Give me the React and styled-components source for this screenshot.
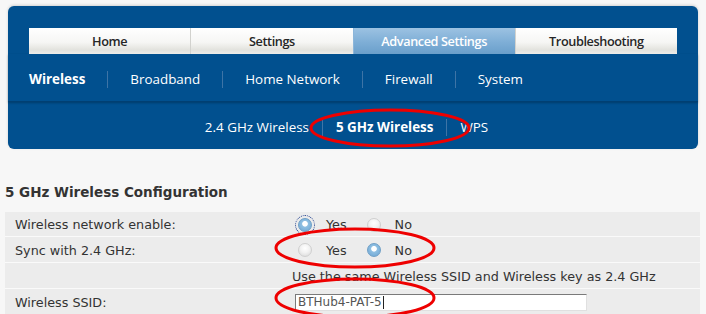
import React from "react";
import styled, { createGlobalStyle } from "styled-components";

const GlobalStyle = createGlobalStyle`
  html, body {
    margin: 0;
    padding: 0;
    background: #f7f7f7;
  }
  body {
    font-family: "DejaVu Sans", Verdana, sans-serif;
  }
`;

const Page = styled.div`
  position: relative;
  width: 706px;
  height: 314px;
  overflow: hidden;
  padding-top: 6px;
  box-sizing: border-box;
`;

const Banner = styled.div`
  margin: 0 8px;
  background: #01508f;
  border-radius: 6px;
  box-shadow: 0 -1px 3px rgba(0, 0, 0, 0.15);
  font-family: "Open Sans", "Noto Sans", sans-serif;
  color: #fff;
`;

const TabBar = styled.div`
  display: flex;
  padding: 22px 21px 0;
`;

const Tab = styled.div`
  flex: 1;
  height: 26px;
  display: flex;
  align-items: center;
  justify-content: center;
  font-size: 12.7px;
  font-weight: 600;
  letter-spacing: -0.4px;
  color: ${(p) => (p.$active ? "#ffffff" : "#262626")};
  background: ${(p) =>
    p.$active
      ? "linear-gradient(to bottom, #9cc2e2 0%, #7eaed6 55%, #6a9fcb 100%)"
      : "linear-gradient(to bottom, #ffffff 0%, #f6f6f4 55%, #e2e2dd 85%, #ececea 100%)"};
  border-left: 1px solid ${(p) => (p.$active ? "#8cb6da" : "#d2d2ce")};
  &:first-child {
    border-left: none;
  }
`;

const MainNav = styled.div`
  display: flex;
  align-items: center;
  height: 48px;
  padding: 3px 0 0 21px;
  box-sizing: border-box;
  border-bottom: 1px solid #013f72;
  box-shadow: 0 1px 2px rgba(0, 0, 0, 0.25);
`;

const SubNav = styled.div`
  display: flex;
  align-items: center;
  justify-content: center;
  height: 47px;
  padding-top: 4px;
  box-sizing: border-box;
`;

const NavItem = styled.span`
  font-size: 13.4px;
  font-weight: ${(p) => (p.$active ? 700 : 400)};
  color: #fff;
  padding: 0 ${(p) => p.$pad}px;
  line-height: 17px;
  border-left: 1px solid #3e74a6;
  &:first-child {
    padding-left: 0;
    border-left: none;
  }
`;

const Content = styled.div`
  padding: 0 6px 0 5px;
`;

const Heading = styled.h2`
  margin: 35px 0 12px;
  font-size: 13.5px;
  font-weight: 700;
  color: #333;
`;

const Row = styled.div`
  display: grid;
  grid-template-columns: 287px 1fr;
  align-items: center;
  height: 25px;
  padding-top: 1px;
  box-sizing: border-box;
  background: #ececec;
  border-bottom: 1px solid #fafafa;
  font-size: 12.75px;
  color: #333;
  & + & {
    height: 26px;
  }
`;

const Label = styled.div`
  padding-left: 10px;
`;

const Value = styled.div`
  display: flex;
  align-items: center;
`;

const RadioWrap = styled.label`
  display: flex;
  align-items: center;
  margin-right: 14px;
`;

const Radio = styled.span`
  position: relative;
  width: 14px;
  height: 14px;
  margin: 0 14px 0 6px;
  border-radius: 50%;
  box-sizing: border-box;
  background: ${(p) =>
    p.$checked
      ? "radial-gradient(circle at 50% 40%, #ffffff 0 2.4px, #8fbfe2 3.2px, #6aa4d2 100%)"
      : "radial-gradient(circle at 50% 35%, #ffffff 0%, #f2f2f2 45%, #d6d6d6 100%)"};
  border: 1px solid ${(p) => (p.$checked ? "#6f9fc6" : "#d0d0d0")};
  outline: ${(p) => (p.$focus ? "1px dotted #1a3a8a" : "none")};
  outline-offset: 2px;
`;

const Note = styled.div`
  padding-left: 0;
`;

const SsidInput = styled.div`
  margin-left: 3px;
  width: 288px;
  height: 15px;
  background: #fff;
  border-top: 1px solid #7a7a7a;
  border-left: 1px solid #7a7a7a;
  border-right: 1px solid #e0e0e0;
  border-bottom: 1px solid #e0e0e0;
  font-size: 12px;
  line-height: 15px;
  color: #555;
  padding-left: 2px;
  display: flex;
  align-items: center;
`;

const Caret = styled.span`
  display: inline-block;
  width: 1px;
  height: 13px;
  background: #222;
  margin-left: 1px;
`;

const Marks = styled.svg`
  position: absolute;
  left: 0;
  top: 0;
  pointer-events: none;
`;

const tabs = ["Home", "Settings", "Advanced Settings", "Troubleshooting"];
const mainNav = ["Wireless", "Broadband", "Home Network", "Firewall", "System"];
const subNav = ["2.4 GHz Wireless", "5 GHz Wireless", "WPS"];

const RadioPair = ({ yes, focus }) => (
  <Value>
    <RadioWrap>
      <Radio $checked={yes} $focus={focus} />
      Yes
    </RadioWrap>
    <RadioWrap>
      <Radio $checked={!yes} />
      No
    </RadioWrap>
  </Value>
);

export default function App() {
  return (
    <Page>
      <GlobalStyle />
      <Banner>
        <TabBar>
          {tabs.map((t) => (
            <Tab key={t} $active={t === "Advanced Settings"}>
              {t}
            </Tab>
          ))}
        </TabBar>
        <MainNav>
          {mainNav.map((n, i) => (
            <NavItem key={n} $pad={22} $active={i === 0}>
              {n}
            </NavItem>
          ))}
        </MainNav>
        <SubNav>
          {subNav.map((n, i) => (
            <NavItem key={n} $pad={13} $active={i === 1}>
              {n}
            </NavItem>
          ))}
        </SubNav>
      </Banner>
      <Content>
        <Heading>5 GHz Wireless Configuration</Heading>
        <Row>
          <Label>Wireless network enable:</Label>
          <RadioPair yes focus />
        </Row>
        <Row>
          <Label>Sync with 2.4 GHz:</Label>
          <RadioPair yes={false} />
        </Row>
        <Row>
          <Label />
          <Note>Use the same Wireless SSID and Wireless key as 2.4 GHz</Note>
        </Row>
        <Row>
          <Label>Wireless SSID:</Label>
          <Value>
            <SsidInput>
              BTHub4-PAT-5
              <Caret />
            </SsidInput>
          </Value>
        </Row>
      </Content>
      <Marks width="706" height="314" viewBox="0 0 706 314">
        <g fill="none" stroke="#ee0000" strokeWidth="3">
          <ellipse cx="390" cy="128" rx="79" ry="18" />
          <ellipse cx="355" cy="248" rx="79" ry="19" />
          <ellipse cx="355" cy="298" rx="79" ry="19" />
        </g>
      </Marks>
    </Page>
  );
}
